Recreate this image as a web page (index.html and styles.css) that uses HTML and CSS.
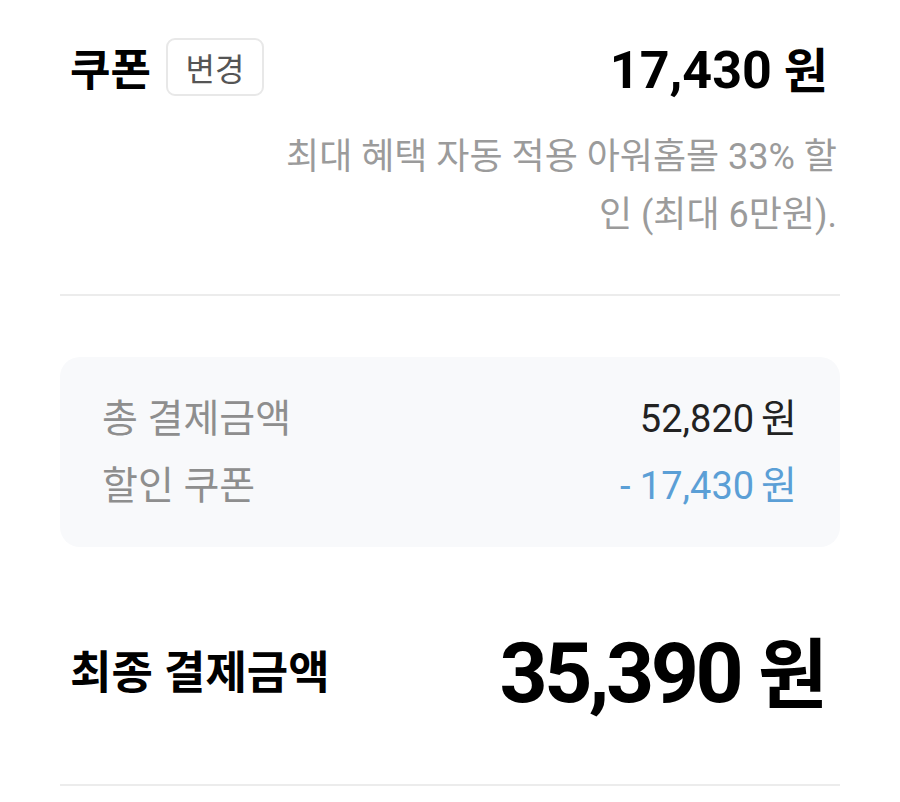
FILE: index.html
```html
<!DOCTYPE html>
<html lang="ko">
<head>
    <meta charset="UTF-8">
    <meta name="viewport" content="width=device-width, initial-scale=1.0">
    <title>결제 정보</title>
    <link rel="stylesheet" href="styles.css">
</head>
<body>
    <section class="coupon">
        <div class="row">
            <div class="title-wrap">
                <h2 class="title">쿠폰</h2>
                <button class="btn-change">변경</button>
            </div>
            <p class="coupon-value">17,430<span class="won">원</span></p>
        </div>
        <p class="desc">최대 혜택 자동 적용 아워홈몰 33% 할<br>인 (최대 6만원).</p>
    </section>

    <hr class="divider">

    <div class="summary">
        <div class="summary-row">
            <span class="label">총 결제금액</span>
            <span class="amount">52,820<span class="won-sm">원</span></span>
        </div>
        <div class="summary-row">
            <span class="label">할인 쿠폰</span>
            <span class="amount discount">- 17,430<span class="won-sm">원</span></span>
        </div>
    </div>

    <div class="total">
        <h2 class="total-label">최종 결제금액</h2>
        <p class="total-value">35,390<span class="won-lg">원</span></p>
    </div>

    <hr class="divider">
</body>
</html>
```

FILE: styles.css
```css
body {
    margin: 0;
    padding: 38px 60px 0;
    background: #fff;
    color: #111;
    font-family: Roboto, "Noto Sans CJK KR", sans-serif;
}
.row {
    display: flex;
    justify-content: space-between;
    align-items: center;
    padding: 0 12px 0 10px;
    height: 58px;
}
.title-wrap {
    display: flex;
    align-items: center;
    gap: 15px;
}
.title {
    margin: 0;
    font-size: 44px;
    font-weight: 700;
    color: #000;
}
.btn-change {
    width: 98px;
    height: 58px;
    border: 2px solid #e8e8e8;
    border-radius: 9px;
    background: #fff;
    color: #555;
    font-family: inherit;
    font-size: 32px;
    padding: 0;
}
.coupon-value {
    margin: 0;
    font-size: 52px;
    font-weight: 700;
    color: #000;
}
.won {
    margin-left: 12px;
    font-size: 48px;
}
.desc {
    margin: 32px 0 0;
    padding-right: 3px;
    text-align: right;
    font-size: 36px;
    line-height: 58px;
    color: #9b9b9b;
}
.divider {
    margin: 50px 0 0;
    border: none;
    height: 2px;
    background: #ececec;
}
.summary {
    margin-top: 61px;
    background: #f8f9fb;
    border-radius: 20px;
    padding: 24px 43px 32px 42px;
}
.summary-row {
    display: flex;
    justify-content: space-between;
    align-items: center;
    height: 67px;
}
.label {
    font-size: 39px;
    color: #8e8e8e;
}
.amount {
    font-size: 38px;
    color: #222;
}
.won-sm {
    margin-left: 7px;
    font-size: 39px;
}
.discount {
    color: #5b9fd6;
}
.total {
    display: flex;
    justify-content: space-between;
    align-items: center;
    height: 100px;
    margin-top: 72px;
    padding: 0 12px 0 10px;
}
.total-label {
    margin: 0;
    font-size: 45px;
    font-weight: 700;
    color: #000;
}
.total-value {
    margin: 0;
    font-size: 84px;
    font-weight: 700;
    letter-spacing: -3.5px;
    color: #000;
}
.won-lg {
    margin-left: 18px;
    font-size: 76px;
    letter-spacing: 0;
}
.total + .divider {
    margin-top: 65px;
}
```
